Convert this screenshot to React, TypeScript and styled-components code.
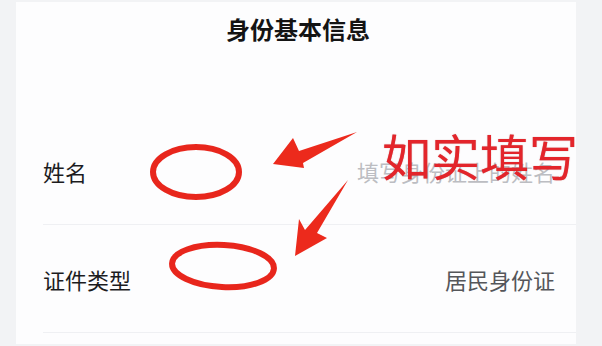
import React from "react";
import styled, { createGlobalStyle } from "styled-components";

const GlobalStyle = createGlobalStyle`
  html, body {
    margin: 0;
    padding: 0;
    background: #f2f3f5;
  }
  body {
    font-family: "Noto Sans CJK SC", "Noto Sans", sans-serif;
  }
  * { box-sizing: border-box; }
`;

const Page = styled.div`
  position: relative;
  width: 602px;
  height: 346px;
  padding: 2px 26px 2px 16px;
  display: flex;
  background: #f2f3f5;
  overflow: hidden;
`;

const Card = styled.div`
  flex: 1;
  display: flex;
  flex-direction: column;
  background: #fdfdfe;
`;

const Header = styled.div`
  height: 54px;
  display: flex;
  align-items: center;
  justify-content: center;
  padding-left: 4px;
  font-size: 24px;
  font-weight: 700;
  color: #141414;
  line-height: 1;
`;

const Rows = styled.div`
  margin-top: 61px;
  display: flex;
  flex-direction: column;
`;

const Row = styled.div`
  height: 108px;
  margin-left: 27px;
  padding-right: 21px;
  display: flex;
  align-items: center;
  justify-content: space-between;
  border-bottom: 1px solid #eff0f3;
`;

const Label = styled.span`
  font-size: 22px;
  color: #1c1c1e;
  line-height: 1;
`;

const Value = styled.span<{ $placeholder?: boolean }>`
  font-size: 22px;
  line-height: 1;
  color: ${(p) => (p.$placeholder ? "#bcbdc2" : "#55565a")};
`;

const Overlay = styled.svg`
  position: absolute;
  left: 0;
  top: 0;
  pointer-events: none;
`;

const Callout = styled.div`
  position: absolute;
  left: 382px;
  top: 130px;
  font-size: 49px;
  line-height: 1;
  color: #e3252b;
  white-space: nowrap;
  text-shadow: 0 0 1px rgba(150, 20, 20, 0.5);
  pointer-events: none;
`;

export default function App() {
  return (
    <>
      <GlobalStyle />
      <Page>
        <Card>
          <Header>身份基本信息</Header>
          <Rows>
            <Row>
              <Label>姓名</Label>
              <Value $placeholder>填写身份证上的姓名</Value>
            </Row>
            <Row>
              <Label>证件类型</Label>
              <Value>居民身份证</Value>
            </Row>
          </Rows>
        </Card>
        <Overlay width="602" height="346" viewBox="0 0 602 346">
          <defs>
            <filter id="soft" x="-10%" y="-10%" width="120%" height="120%">
              <feGaussianBlur stdDeviation="0.6" />
            </filter>
          </defs>
          <g filter="url(#soft)">
            <ellipse cx="196" cy="172" rx="43" ry="25" fill="none" stroke="#e8281f" strokeWidth="6" />
            <ellipse
              cx="223"
              cy="266"
              rx="51"
              ry="21"
              fill="none"
              stroke="#e8281f"
              strokeWidth="6"
              transform="rotate(3 223 266)"
            />
            <polygon
              points="273,164 293,138 299,151 357,132 303,163 304,168"
              fill="#ec2a1e"
            />
            <polygon
              points="348,180 305,230 299,219 295,256 327,238 317,233"
              fill="#ec2a1e"
            />
          </g>
        </Overlay>
        <Callout>如实填写</Callout>
      </Page>
    </>
  );
}
